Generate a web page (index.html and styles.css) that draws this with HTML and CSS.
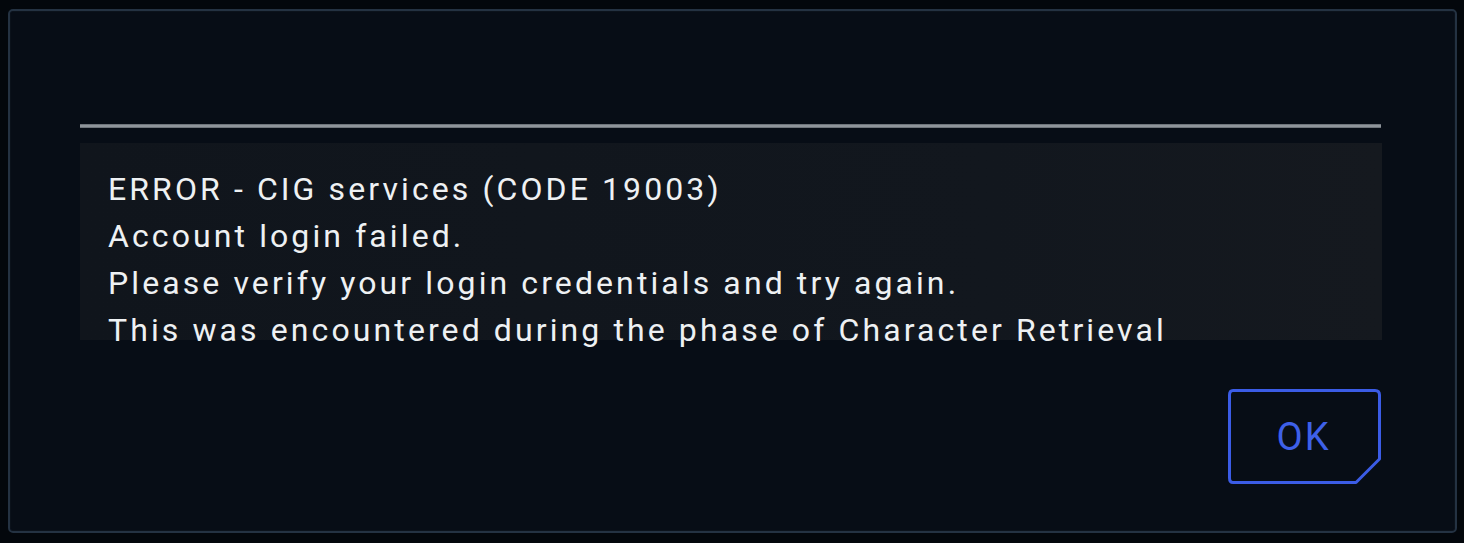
FILE: index.html
```html
<!DOCTYPE html>
<html lang="en">
<head>
<meta charset="utf-8">
<title>Error</title>
<link rel="stylesheet" href="styles.css">
</head>
<body>
<div class="panel">
  <div class="rule"></div>
  <div class="message">
    <p>ERROR - CIG services (CODE 19003)</p>
    <p>Account login failed.</p>
    <p>Please verify your login credentials and try again.</p>
    <p>This was encountered during the phase of Character Retrieval</p>
  </div>
  <div class="actions">
    <button class="ok">
      <svg class="ok-frame" width="155" height="97" viewBox="0 0 155 97" aria-hidden="true">
        <path d="M6 2.5 H148 Q152.5 2.5 152.5 7 V71 L129 94.5 H6 Q2.5 94.5 2.5 90 V7 Q2.5 2.5 6 2.5 Z" fill="none" stroke="#3b5ce6" stroke-width="3" stroke-linejoin="round"/>
      </svg>
      <span>OK</span>
    </button>
  </div>
</div>
</body>
</html>
```

FILE: styles.css
```css
* { box-sizing: border-box; }
html, body { margin: 0; height: 100%; }
body {
  background: #03070c;
  padding: 9px 7px 10px 8px;
  font-family: Roboto, "DejaVu Sans", sans-serif;
}
.panel {
  height: 524px;
  background: #070d16;
  border: 2px solid #243242;
  border-radius: 5px;
  padding: 113px 73px 0 70px;
  display: flex;
  flex-direction: column;
  box-shadow: inset 0 0 0 1px #0b121b;
}
.rule {
  height: 4px;
  background: #8f959b;
  border-top: 1px solid #6f757c;
  border-bottom: 1px solid #6f757c;
  margin-right: 1px;
}
.message {
  margin-top: 15px;
  height: 197px;
  background: linear-gradient(90deg, #10151c 0%, #12171e 70%, #15191f 100%);
  padding: 23px 0 0 28px;
  color: #eef1f3;
  font-size: 32px;
  line-height: 47px;
  letter-spacing: 3.1px;
}
.message p { margin: 0; white-space: nowrap; }
.actions {
  display: flex;
  justify-content: flex-end;
  margin-top: 48px;
}
.ok {
  position: relative;
  width: 155px;
  height: 97px;
  background: transparent;
  border: 0;
  padding: 0;
  display: flex;
  align-items: center;
  justify-content: center;
  color: #3e60e8;
  font-family: Roboto, "DejaVu Sans", sans-serif;
  font-size: 38px;
  letter-spacing: 2px;
  cursor: pointer;
}
.ok-frame { position: absolute; left: 0; top: 0; }
.ok span { position: relative; margin-right: 2px; }
```
